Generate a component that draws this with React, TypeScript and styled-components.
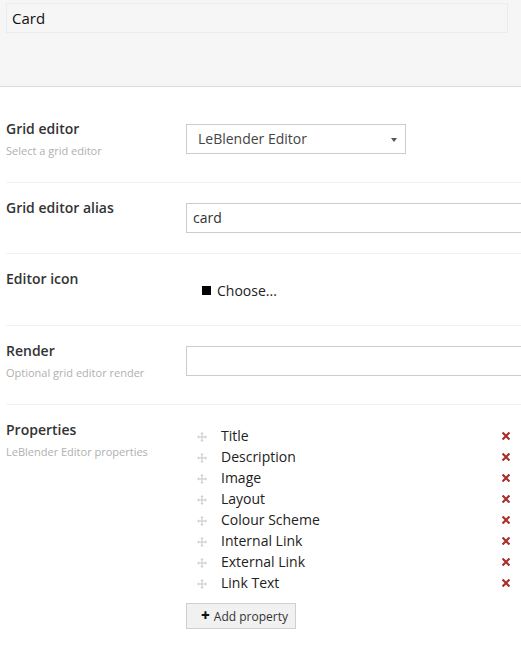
import React from "react";
import styled, { createGlobalStyle } from "styled-components";

const GlobalStyle = createGlobalStyle`
  html, body {
    margin: 0;
    padding: 0;
    background: #fff;
    overflow: hidden;
  }
  body {
    font-family: "Open Sans", "Liberation Sans", sans-serif;
    color: #222;
  }
`;

const Page = styled.div`
  width: 521px;
  overflow: hidden;
`;

const Header = styled.div`
  height: 87px;
  padding: 3px 13px 0 6px;
  box-sizing: border-box;
  background: #f6f6f6;
  border-bottom: 1px solid #dcdcdc;
`;

const NameInput = styled.div`
  height: 30px;
  box-sizing: border-box;
  border: 1px solid #ececec;
  padding: 0 5px;
  font-size: 15px;
  line-height: 28px;
  color: #111;
`;

const Body = styled.div`
  padding-top: 17px;
`;

const Row = styled.div<{ $last?: boolean }>`
  display: grid;
  grid-template-columns: 180px 420px;
  margin-left: 6px;
  padding: 15px 0 20px;
  border-bottom: ${(p) => (p.$last ? "none" : "1px solid #f2f2f2")};
`;

const LabelCol = styled.div`
  display: flex;
  flex-direction: column;
`;

const Label = styled.div`
  font-size: 14px;
  font-weight: 600;
  line-height: 20px;
  color: #333;
`;

const Desc = styled.div`
  font-size: 11px;
  line-height: 23px;
  color: #b0b0b0;
`;

const Control = styled.div`
  padding-top: 5px;
`;

const SelectBox = styled.div`
  position: relative;
  width: 220px;
  height: 30px;
  box-sizing: border-box;
  border: 1px solid #cccccc;
  padding: 0 11px;
  font-size: 14px;
  line-height: 28px;
  color: #444;
`;

const Caret = styled.span`
  position: absolute;
  right: 8px;
  top: 13px;
  width: 0;
  height: 0;
  border-left: 3px solid transparent;
  border-right: 3px solid transparent;
  border-top: 4px solid #555;
`;

const TextInput = styled.div`
  width: 400px;
  height: 30px;
  box-sizing: border-box;
  border: 1px solid #cccccc;
  padding: 0 6px;
  font-size: 14px;
  line-height: 28px;
  color: #333;
`;

const IconPicker = styled.div`
  display: flex;
  align-items: center;
  gap: 6px;
  padding: 7px 0 4px 16px;
  font-size: 14px;
  line-height: 20px;
  color: #222;
`;

const Square = styled.span`
  width: 9px;
  height: 9px;
  background: #000;
  margin-top: -1px;
`;

const PropList = styled.div`
  width: 327px;
  display: flex;
  flex-direction: column;
`;

const PropItem = styled.div`
  display: flex;
  align-items: center;
  height: 21px;
  font-size: 14px;
  line-height: 21px;
  color: #222;
`;

const Handle = styled.svg`
  width: 10px;
  height: 10px;
  margin: 2px 14px 0 11px;
  flex: none;
`;

const PropName = styled.span`
  flex: 1;
`;

const Remove = styled.svg`
  width: 8px;
  height: 8px;
  margin-right: 3px;
  flex: none;
`;

const AddButton = styled.div`
  margin-top: 10px;
  width: 110px;
  height: 26px;
  box-sizing: border-box;
  display: flex;
  align-items: center;
  gap: 4px;
  padding-left: 14px;
  background: #f1f1f1;
  border: 1px solid #cfcfcf;
  font-size: 12px;
  color: #333;
`;

const Plus = styled.span`
  font-weight: 800;
  font-size: 15px;
  line-height: 15px;
  color: #111;
  margin-top: -2px;
`;

const properties = [
  "Title",
  "Description",
  "Image",
  "Layout",
  "Colour Scheme",
  "Internal Link",
  "External Link",
  "Link Text",
];

function MoveIcon() {
  return (
    <Handle viewBox="0 0 10 10">
      <g fill="#cfcfcf">
        <rect x="4.4" y="1.5" width="1.2" height="7" />
        <rect x="1.5" y="4.4" width="7" height="1.2" />
        <polygon points="5,0 3.3,2 6.7,2" />
        <polygon points="5,10 3.3,8 6.7,8" />
        <polygon points="0,5 2,3.3 2,6.7" />
        <polygon points="10,5 8,3.3 8,6.7" />
      </g>
    </Handle>
  );
}

function RemoveIcon() {
  return (
    <Remove viewBox="0 0 8 8">
      <path d="M1.3 1.3 L6.7 6.7 M6.7 1.3 L1.3 6.7" stroke="#a8302c" strokeWidth="2.2" strokeLinecap="square" />
    </Remove>
  );
}

export default function App() {
  return (
    <Page>
      <GlobalStyle />
      <Header>
        <NameInput>Card</NameInput>
      </Header>
      <Body>
        <Row>
          <LabelCol>
            <Label>Grid editor</Label>
            <Desc>Select a grid editor</Desc>
          </LabelCol>
          <Control>
            <SelectBox>
              LeBlender Editor
              <Caret />
            </SelectBox>
          </Control>
        </Row>
        <Row>
          <LabelCol>
            <Label>Grid editor alias</Label>
          </LabelCol>
          <Control>
            <TextInput>card</TextInput>
          </Control>
        </Row>
        <Row>
          <LabelCol>
            <Label>Editor icon</Label>
          </LabelCol>
          <Control>
            <IconPicker>
              <Square />
              Choose...
            </IconPicker>
          </Control>
        </Row>
        <Row>
          <LabelCol>
            <Label>Render</Label>
            <Desc>Optional grid editor render</Desc>
          </LabelCol>
          <Control>
            <TextInput />
          </Control>
        </Row>
        <Row $last>
          <LabelCol>
            <Label>Properties</Label>
            <Desc>LeBlender Editor properties</Desc>
          </LabelCol>
          <Control>
            <PropList>
              {properties.map((name) => (
                <PropItem key={name}>
                  <MoveIcon />
                  <PropName>{name}</PropName>
                  <RemoveIcon />
                </PropItem>
              ))}
            </PropList>
            <AddButton>
              <Plus>+</Plus>
              Add property
            </AddButton>
          </Control>
        </Row>
      </Body>
    </Page>
  );
}
